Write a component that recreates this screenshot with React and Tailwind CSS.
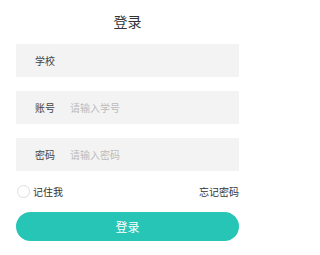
export default function App() {
  return (
    <div
      className="w-[255px] h-[255px] bg-white px-4 flex flex-col"
      style={{ fontFamily: '"Noto Sans CJK SC", "Noto Sans", sans-serif' }}
    >
      <div className="h-[44px] flex items-center justify-center pb-[2px] text-[14px] text-[#333]">
        登录
      </div>

      <div className="h-[33px] bg-[#f3f3f3] flex items-center pl-[19px] text-[10px] text-[#444]">
        学校
      </div>

      <div className="mt-[14px] h-[33px] bg-[#f3f3f3] flex items-center pl-[19px] text-[10px]">
        <span className="text-[#444] w-[35px]">账号</span>
        <span className="text-[#bbb]">请输入学号</span>
      </div>

      <div className="mt-[14px] h-[33px] bg-[#f3f3f3] flex items-center pl-[19px] text-[10px]">
        <span className="text-[#444] w-[35px]">密码</span>
        <span className="text-[#bbb]">请输入密码</span>
      </div>

      <div className="h-[41px] flex items-center justify-between text-[10px] text-[#333]">
        <div className="flex items-center gap-[3px]">
          <span className="ml-[1px] w-[13px] h-[13px] rounded-full border border-[#ddd] bg-white"></span>
          <span>记住我</span>
        </div>
        <span>忘记密码</span>
      </div>

      <button className="h-[29px] w-full rounded-full bg-[#27c5b5] text-white text-[12px] flex items-center justify-center">
        登录
      </button>
    </div>
  );
}
